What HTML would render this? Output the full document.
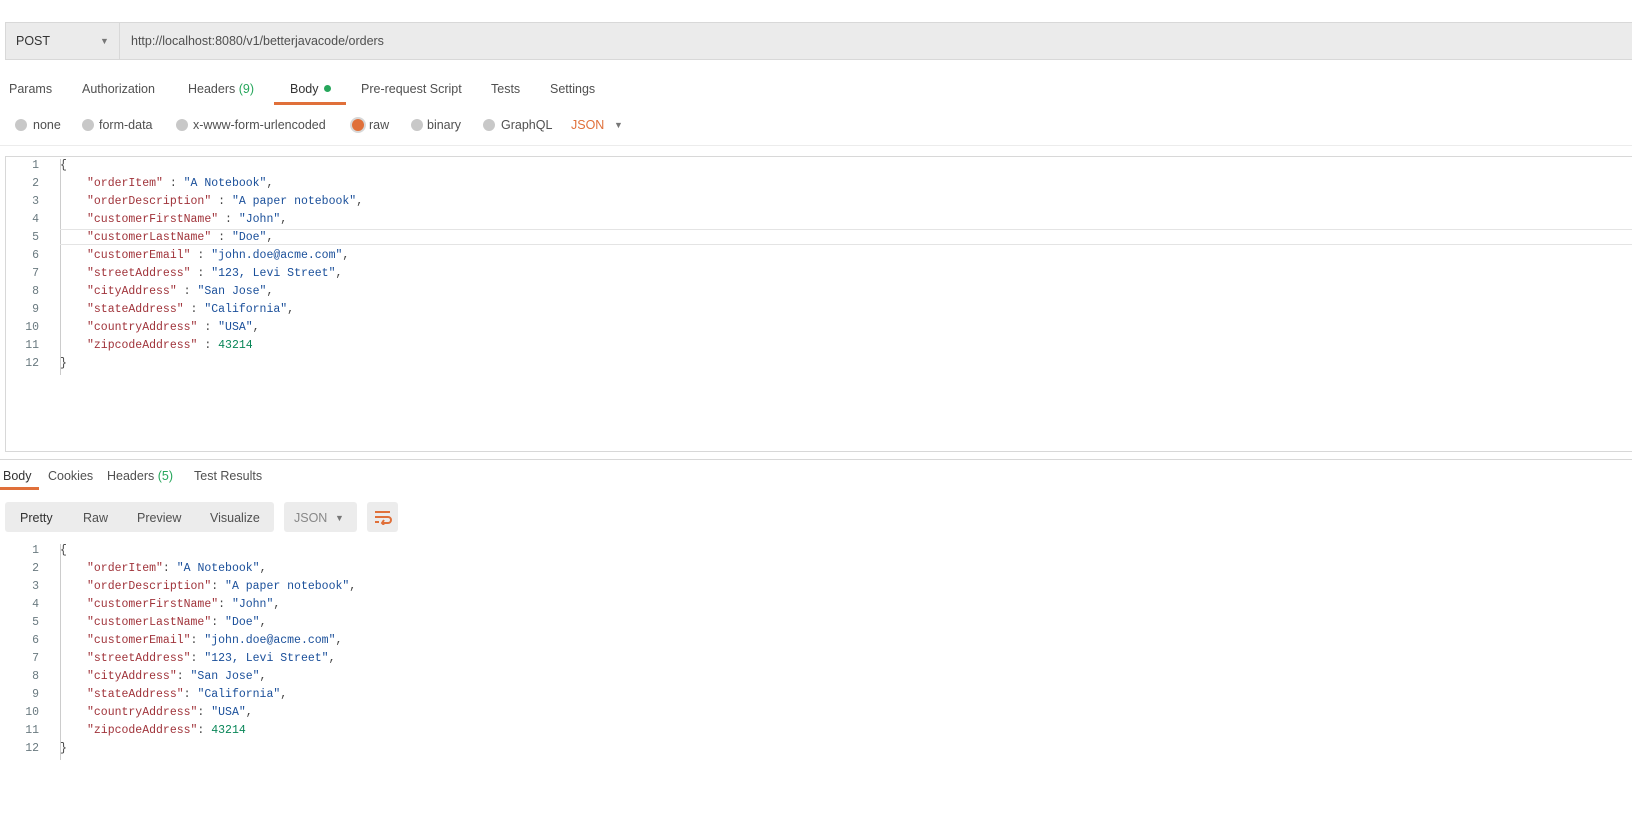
<!DOCTYPE html>
<html><head><style>
body{margin:0;width:1632px;height:817px;background:#fff;position:relative;overflow:hidden;font-family:"Liberation Sans",sans-serif;color:#505050;}
.a{position:absolute;white-space:nowrap}
.ui{font-size:12.5px}
.code{font-family:"Liberation Mono",monospace;font-size:11.5px;}
.k{color:#a0333a}.s{color:#1a4f9a}.n{color:#098658}.p{color:#444}
.ln{position:absolute;width:30px;text-align:right;color:#6a7a80;font-family:"Liberation Mono",monospace;font-size:11.5px}
.radio{position:absolute;width:12px;height:12px;border-radius:50%;background:#c8c8c8}
</style></head><body>
<div class="a" style="left:5px;top:22px;width:1640px;height:38px;background:#ebebeb;border:1px solid #d8d8d8;box-sizing:border-box"></div>
<div class="a" style="left:119px;top:22px;width:1px;height:38px;background:#d8d8d8"></div>
<div class="a ui" style="left:16px;top:34px;color:#333">POST</div>
<div class="a" style="left:100px;top:36px;font-size:9px;color:#777">▼</div>
<div class="a ui" style="left:131px;top:34px;color:#505050">http://localhost:8080/v1/betterjavacode/orders</div>
<div class="a ui" style="left:9px;top:82px">Params</div>
<div class="a ui" style="left:82px;top:82px">Authorization</div>
<div class="a ui" style="left:188px;top:82px">Headers <span style="color:#26a65b">(9)</span></div>
<div class="a ui" style="left:290px;top:82px;color:#333">Body <span style="display:inline-block;width:7px;height:7px;border-radius:50%;background:#26a65b;vertical-align:1px;margin-left:2px"></span></div>
<div class="a" style="left:274px;top:102px;width:72px;height:3px;background:#e0703a"></div>
<div class="a ui" style="left:361px;top:82px">Pre-request Script</div>
<div class="a ui" style="left:491px;top:82px">Tests</div>
<div class="a ui" style="left:550px;top:82px">Settings</div>
<div class="radio" style="left:15px;top:119px"></div><div class="a ui" style="left:33px;top:118px">none</div>
<div class="radio" style="left:82px;top:119px"></div><div class="a ui" style="left:99px;top:118px">form-data</div>
<div class="radio" style="left:176px;top:119px"></div><div class="a ui" style="left:193px;top:118px">x-www-form-urlencoded</div>
<div class="radio" style="left:352px;top:119px;background:#e0703a;box-shadow:0 0 0 2px #d8d8d8"></div><div class="a ui" style="left:369px;top:118px">raw</div>
<div class="radio" style="left:411px;top:119px"></div><div class="a ui" style="left:427px;top:118px">binary</div>
<div class="radio" style="left:483px;top:119px"></div><div class="a ui" style="left:501px;top:118px">GraphQL</div>
<div class="a ui" style="left:571px;top:118px;color:#e0703a">JSON</div>
<div class="a" style="left:614px;top:120px;font-size:9px;color:#777">▼</div>
<div class="a" style="left:0;top:145px;width:1632px;height:1px;background:#ececec"></div>
<div class="a" style="left:5px;top:156px;width:1640px;height:296px;border:1px solid #d8d8d8;box-sizing:border-box"></div>
<div class="a" style="left:60px;top:159px;width:1px;height:216px;background:#ccc"></div>
<div class="a" style="left:60px;top:229px;width:1580px;height:16px;border-top:1px solid #e4e4e4;border-bottom:1px solid #e4e4e4;box-sizing:border-box"></div>
<div id="req"></div>
<div class="a" style="left:0;top:459px;width:1632px;height:1px;background:#d8d8d8"></div>
<div class="a ui" style="left:3px;top:469px;color:#333">Body</div>
<div class="a" style="left:0;top:487px;width:39px;height:3px;background:#e0703a"></div>
<div class="a ui" style="left:48px;top:469px">Cookies</div>
<div class="a ui" style="left:107px;top:469px">Headers <span style="color:#26a65b">(5)</span></div>
<div class="a ui" style="left:194px;top:469px">Test Results</div>
<div class="a" style="left:5px;top:502px;width:269px;height:30px;background:#ececec;border-radius:3px"></div>
<div class="a ui" style="left:20px;top:511px;color:#333">Pretty</div>
<div class="a ui" style="left:83px;top:511px">Raw</div>
<div class="a ui" style="left:137px;top:511px">Preview</div>
<div class="a ui" style="left:210px;top:511px">Visualize</div>
<div class="a" style="left:284px;top:502px;width:73px;height:30px;background:#ececec;border-radius:3px"></div>
<div class="a ui" style="left:294px;top:511px;color:#888">JSON</div>
<div class="a" style="left:335px;top:513px;font-size:9px;color:#777">▼</div>
<div class="a" style="left:367px;top:502px;width:31px;height:30px;background:#ececec;border-radius:3px"></div>
<svg class="a" style="left:374px;top:509px" width="18" height="16" viewBox="0 0 18 16"><g stroke="#e0703a" stroke-width="2" fill="none"><path d="M1 3h15M1 8h13a3 3 0 0 1 0 6h-5M1 13h4"/><path d="M10 11l-2 3 2 2"/></g></svg>
<div class="a" style="left:60px;top:544px;width:1px;height:216px;background:#ccc"></div>
<div id="res"></div>
<script>
const rows=[['orderItem','s','"A Notebook"'],['orderDescription','s','"A paper notebook"'],['customerFirstName','s','"John"'],['customerLastName','s','"Doe"'],['customerEmail','s','"john.doe@acme.com"'],['streetAddress','s','"123, Levi Street"'],['cityAddress','s','"San Jose"'],['stateAddress','s','"California"'],['countryAddress','s','"USA"'],['zipcodeAddress','n','43214']];
function build(top,sep){let h='';for(let i=0;i<12;i++){const y=top+i*18;h+=`<div class="ln" style="left:9px;top:${y}px">${i+1}</div>`;let c;
if(i==0)c='<span class="p">{</span>';else if(i==11)c='<span class="p">}</span>';else{const r=rows[i-1];c=`<span class="k">"${r[0]}"</span><span class="p">${sep}</span><span class="${r[1]}">${r[2]}</span>`+(i<10?'<span class="p">,</span>':'');}
h+=`<div class="a code" style="left:${i==0||i==11?60:87}px;top:${y}px">${c}</div>`;}return h;}
document.getElementById('req').outerHTML=build(159,' : ');
document.getElementById('res').outerHTML=build(544,': ');
</script>
</body></html>
